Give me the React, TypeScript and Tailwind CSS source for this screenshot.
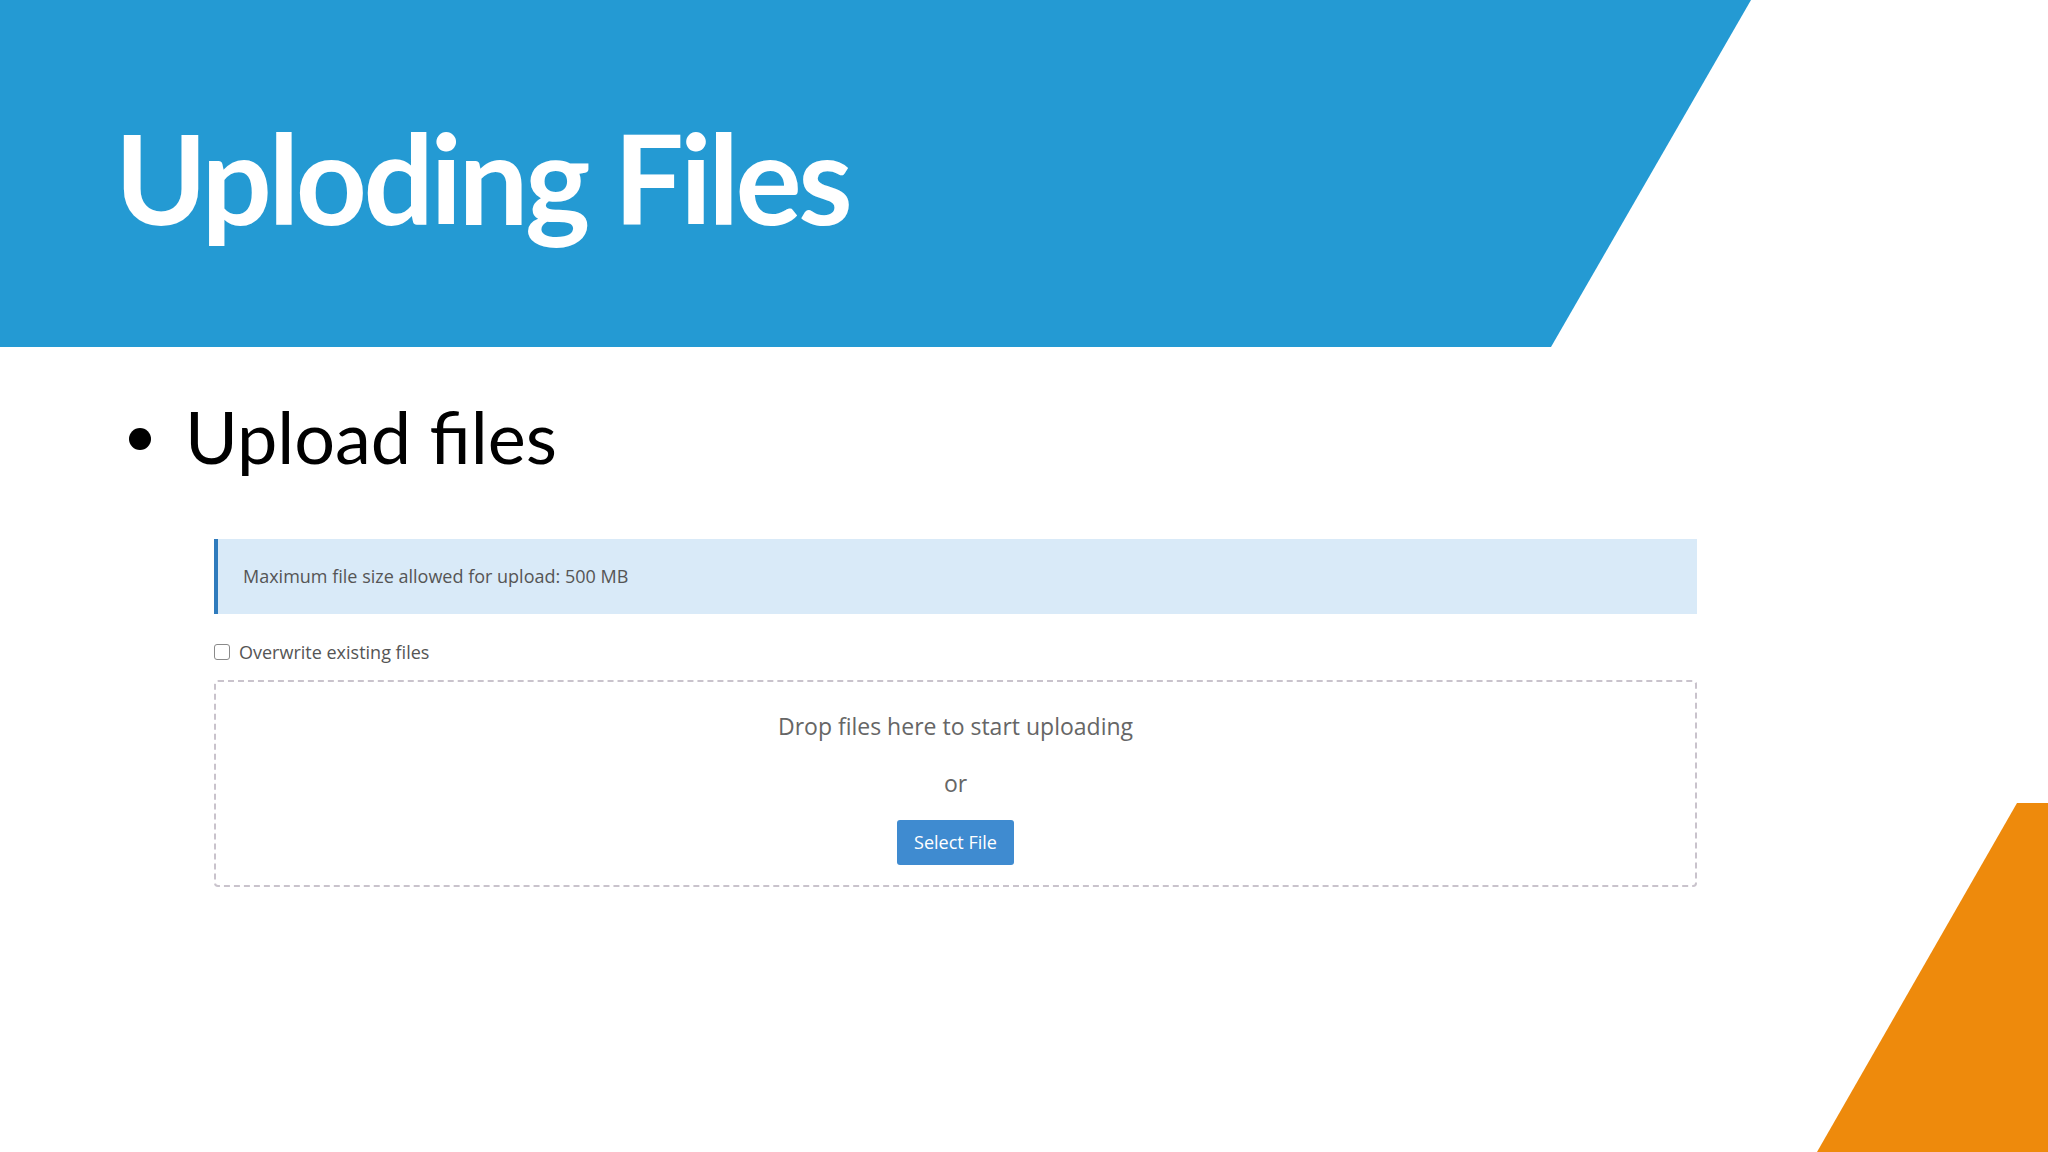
export default function App() {
  return (
    <div className="relative w-[2048px] h-[1152px] overflow-hidden bg-white font-['Lato',sans-serif]">
      {/* slide header band */}
      <header className="h-[347px] bg-[#249ad3] pl-[115px] pt-[115px] [clip-path:polygon(0_0,1751px_0,1551px_100%,0_100%)]">
        <h1 className="text-[124px] leading-none font-bold tracking-[-0.028em] text-white">Uploding Files</h1>
      </header>

      <div className="mt-[53px] flex items-start pl-[129px]">
        <span className="mt-[28px] w-[22px] h-[22px] rounded-full bg-black" />
        <p className="ml-[34px] text-[72px] leading-none text-black">Upload files</p>
      </div>

      {/* cPanel upload panel */}
      <div className="mt-[67px] ml-[214px] w-[1483px] font-['Open_Sans',sans-serif]">
        <div className="h-[75px] flex items-center border-l-4 border-[#2f7bbd] bg-[#d9eaf8] pl-[25px]">
          <span className="text-[18px] text-[#555]">Maximum file size allowed for upload: 500 MB</span>
        </div>

        <label className="mt-[30px] flex items-center gap-[9px]">
          <input
            type="checkbox"
            className="appearance-none w-[16px] h-[16px] border border-[#8a8a8a] rounded-[3px] bg-white"
          />
          <span className="text-[18px] leading-[16px] text-[#555]">Overwrite existing files</span>
        </label>

        <div className="mt-[20px] h-[207px] border-2 border-dashed border-[#c9c3cc] rounded-[4px] flex flex-col items-center pt-[28px]">
          <p className="text-[23px] leading-[32px] text-[#666]">Drop files here to start uploading</p>
          <p className="mt-[25px] text-[23px] leading-[32px] text-[#666]">or</p>
          <button className="mt-[21px] w-[117px] h-[45px] rounded-[3px] bg-[#3f8bd0] text-[18px] text-white">
            Select File
          </button>
        </div>
      </div>

      {/* orange corner accent */}
      <svg className="absolute left-[1800px] top-[800px]" width="248" height="352" viewBox="0 0 248 352">
        <polygon points="217,3 248,3 248,352 17,352" fill="#ee8a0c" />
      </svg>
    </div>
  );
}
